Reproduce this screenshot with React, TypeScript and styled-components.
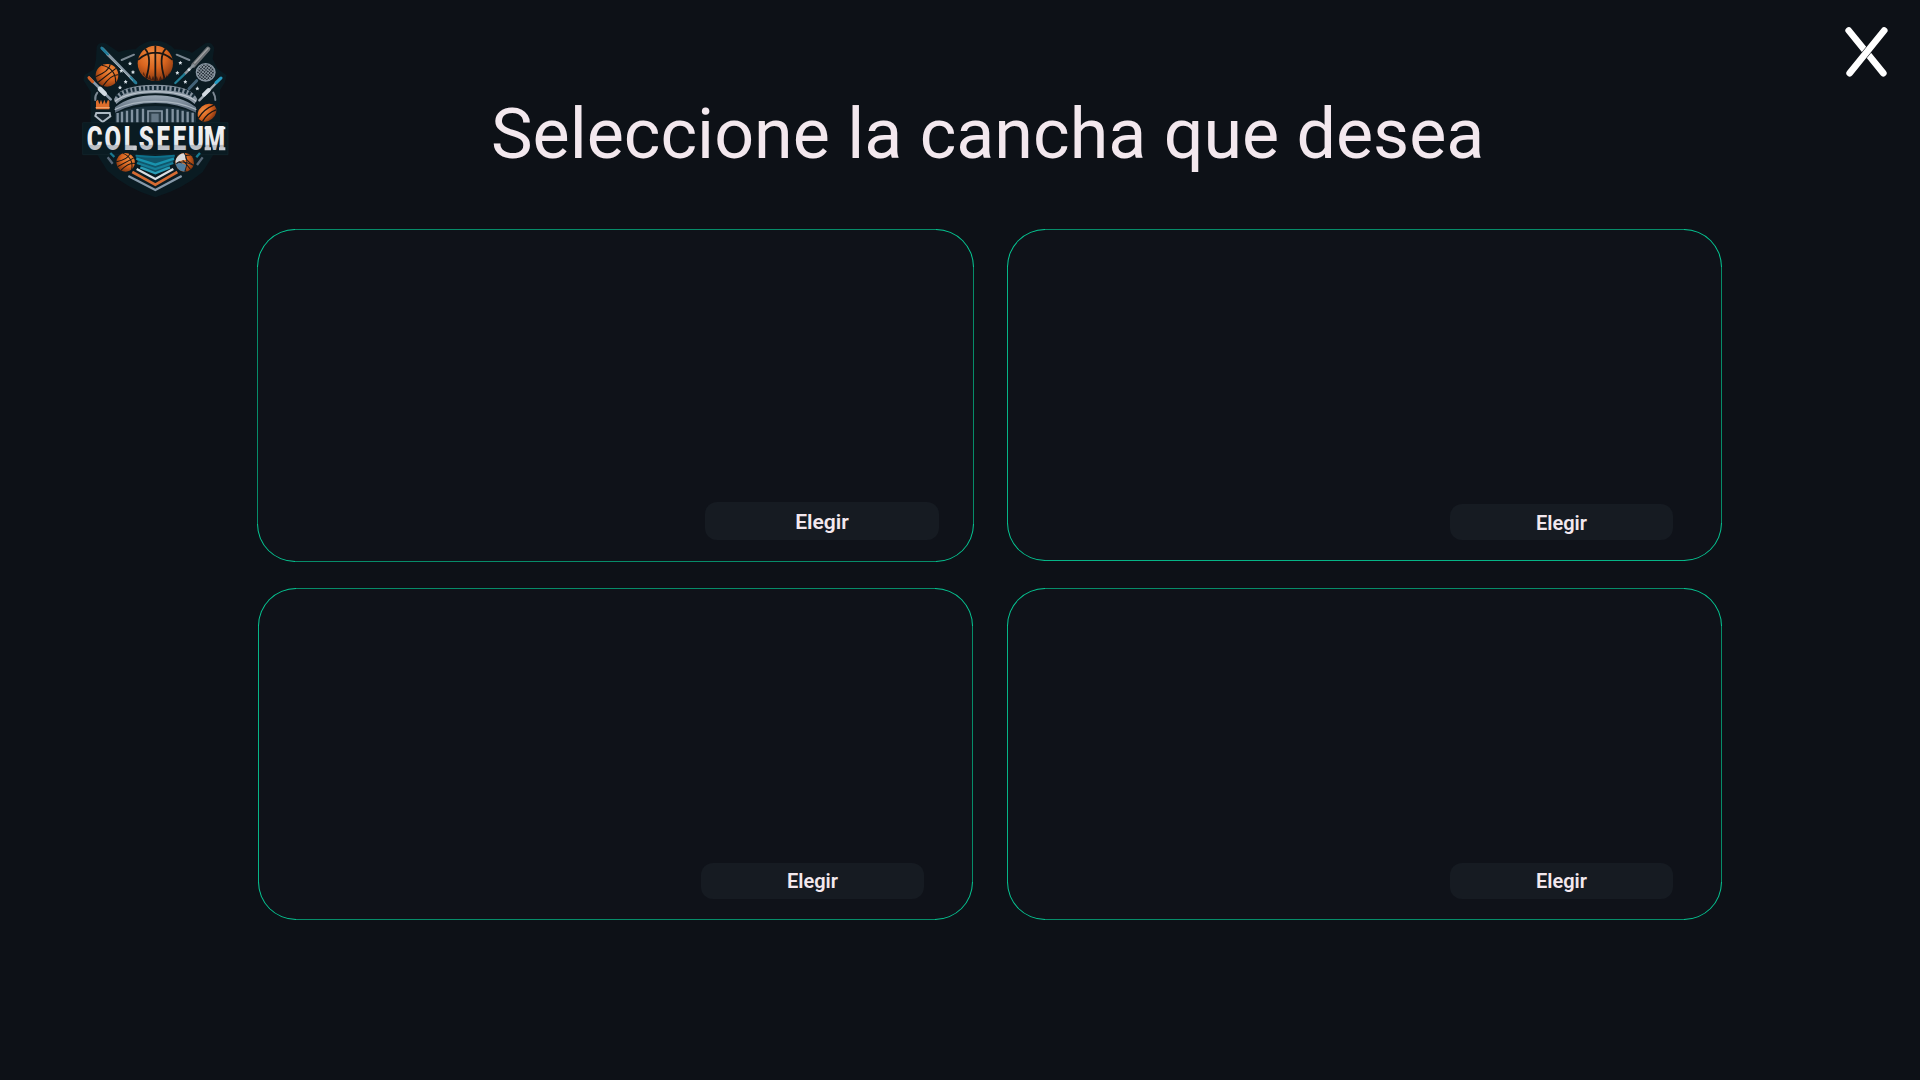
import React from "react";
import styled, { createGlobalStyle } from "styled-components";

const GlobalStyle = createGlobalStyle`
  * { box-sizing: border-box; }
  body { margin: 0; background: #0d1117; overflow: hidden; }
`;

const Screen = styled.div`
  width: 1920px;
  height: 1080px;
  background: #0d1117;
  color: #f3e8ee;
  font-family: Roboto, "Liberation Sans", sans-serif;
  display: flex;
  flex-direction: column;
`;

const Header = styled.header`
  height: 229px;
  display: flex;
  align-items: flex-start;
  padding: 30px 30px 0 70px;
`;

const LogoArt = styled.svg`
  width: 170px;
  height: 170px;
  flex: none;
  overflow: visible;
`;

const Title = styled.h1`
  margin: 62px 0 0;
  padding-left: 251px;
  flex: 1;
  font-size: 70px;
  line-height: 84px;
  font-weight: 400;
  white-space: nowrap;
`;

const CloseButton = styled.button`
  width: 46px;
  height: 54px;
  margin-top: -5px;
  padding: 0;
  border: 0;
  background: none;
  color: #fff;
  display: flex;
`;

const Courts = styled.main`
  display: flex;
  flex-direction: column;
  padding-left: 257px;
`;

const CourtRow = styled.section<{ $height: number }>`
  display: flex;
  align-items: flex-start;
  height: ${(p) => p.$height}px;
`;

interface CardProps {
  $w: number;
  $h: number;
  $ml: number;
  $pad: string;
  $edges: string[];
}

const solid = (c: string) => `linear-gradient(${c}, ${c})`;

/* Straight edges are softer than the rounded corners, so each one is its own background layer. */
const CourtCard = styled.article<CardProps>`
  width: ${(p) => p.$w}px;
  height: ${(p) => p.$h}px;
  margin-left: ${(p) => p.$ml}px;
  padding: ${(p) => p.$pad};
  border: 1px solid transparent;
  border-radius: 38px;
  background:
    ${solid("#0f1219")} padding-box,
    ${(p) => solid(p.$edges[0])} 50% 0 / calc(100% - 76px) 1px no-repeat border-box,
    ${(p) => solid(p.$edges[1])} 100% 50% / 1px calc(100% - 76px) no-repeat border-box,
    ${(p) => solid(p.$edges[2])} 50% 100% / calc(100% - 76px) 1px no-repeat border-box,
    ${(p) => solid(p.$edges[3])} 0 50% / 1px calc(100% - 76px) no-repeat border-box,
    ${solid("#05c894")} border-box;
  display: flex;
  justify-content: flex-end;
  align-items: flex-end;
`;

const ChooseButton = styled.button<{ $large?: boolean; $drop: number }>`
  width: ${(p) => (p.$large ? 234 : 223)}px;
  height: ${(p) => (p.$large ? 38 : 36)}px;
  padding: ${(p) => p.$drop}px 0 0;
  border: 0;
  border-radius: 12px;
  background: #161b22;
  color: #f3e8ee;
  font-family: inherit;
  font-size: ${(p) => (p.$large ? 21 : 20)}px;
  line-height: 24px;
  font-weight: 600;
`;

const Ball = ({ x, y, r, turn = 0 }: { x: number; y: number; r: number; turn?: number }) => (
  <g transform={`translate(${x} ${y}) rotate(${turn}) scale(${r / 50})`}>
    <circle r="50" fill="url(#ball)" />
    <path d="M0-50V50M-49-10Q-26-30 0-30T49-10M-29-41Q-8-18-26 43M29-41Q8-18 26 43" fill="none" stroke="#1a1613" strokeWidth="5" />
  </g>
);

const Logo = () => (
  <LogoArt viewBox="0 0 510 510" role="img" aria-label="Colseeum">
    <defs>
      <radialGradient id="ball" cx="0.42" cy="0.25" r="0.8">
        <stop offset="0" stopColor="#f08d42" />
        <stop offset="0.5" stopColor="#d9651f" />
        <stop offset="1" stopColor="#7d320f" />
      </radialGradient>
      <linearGradient id="steel" x1="0" y1="0" x2="0" y2="1">
        <stop offset="0" stopColor="#f7f7f7" />
        <stop offset="0.64" stopColor="#e6e7ea" />
        <stop offset="0.67" stopColor="#b9bdc3" />
        <stop offset="1" stopColor="#c9ccd1" />
      </linearGradient>
      <linearGradient id="roof" x1="0" y1="0" x2="0" y2="1">
        <stop offset="0" stopColor="#9ba9b6" />
        <stop offset="1" stopColor="#536373" />
      </linearGradient>
      <pattern id="net" width="7" height="7" patternUnits="userSpaceOnUse" patternTransform="rotate(40)">
        <path d="M0 0H7M0 0V7" stroke="#a3aeb7" strokeWidth="3.4" />
      </pattern>
    </defs>

    <path d="M80 50Q88 34 106 40L146 66Q174 56 197 58Q220 32 256 32Q292 32 313 58Q344 58 366 68L406 40Q425 34 433 54L428 86L442 116L470 136L464 158L450 180V278H474V374H430L398 426Q340 476 256 502Q170 475 112 422L82 374H38V278H62V185L40 150L44 134L72 118L78 88Z" fill="#0a1b22" />

    <g strokeLinecap="round" fill="none">
      <path d="M155 90L192 74M320 74L358 90M76 210Q74 198 82 188M436 210Q436 198 430 188" stroke="#7b8893" strokeWidth="6" />
      <path d="M98 56L197 158" stroke="#8999a6" strokeWidth="8" />
      <path d="M95 54L113 73M182 143L198 159" stroke="#217c99" strokeWidth="8" />
      <path d="M110 75L188 151" stroke="#c0c7ce" strokeWidth="2" />
      <path d="M414 57L370 106" stroke="#6c7074" strokeWidth="14" />
      <path d="M414 55L374 99" stroke="#a2a4a5" strokeWidth="4" />
      <path d="M370 106L345 131" stroke="#8a949b" strokeWidth="8" />
      <path d="M343 133L316 159" stroke="#207d94" strokeWidth="7" />
      <path d="M58 144L122 208" stroke="#8b9aa8" strokeWidth="8" />
      <path d="M57 143L68 155" stroke="#ce5d25" strokeWidth="9" />
      <path d="M90 177L104 191" stroke="#d2dbe2" strokeWidth="14" />
      <path d="M453 144L388 211" stroke="#a2adb6" strokeWidth="7" />
      <path d="M453 144L438 158" stroke="#249ac0" strokeWidth="9" />
      <path d="M416 180L402 194" stroke="#d2dbe2" strokeWidth="12" />
      <path d="M380 152L357 176" stroke="#436277" strokeWidth="9" />
    </g>
    <ellipse cx="407" cy="127" rx="29" ry="27" fill="#263039" />
    <ellipse cx="407" cy="127" rx="28" ry="26" fill="url(#net)" stroke="#8795a1" strokeWidth="4" />
    <Ball x={256} y={100} r={53} />
    <path d="M212 121l7 12 2-8 5 16 4-11 5 15 4-11 5 15 5-12 6 14 5-13 6 14 5-14 6 12 4-14 5 12 4-13 4 9 6-19Q288 152 256 153Q226 151 212 121Z" fill="#31170f" opacity="0.75" />
    <Ball x={111} y={136} r={34} turn={52} />
    <g fill="#d3dbe1">
      {[[180, 100], [154, 122], [189, 126], [167, 155], [150, 172], [331, 98], [357, 118], [322, 128], [346, 155], [382, 175]].map(([x, y]) => (
        <path key={`${x}-${y}`} d={`M${x} ${y - 6}l2 4 4 1-3 3 1 4-4-2-4 2 1-4-3-3 4-1z`} />
      ))}
    </g>

    <path d="M132 208Q146 165 256 164Q366 165 382 208L374 222Q340 190 256 190Q172 190 139 222Z" fill="#8794a0" />
    <path d="M141 201Q164 174 256 174Q348 174 374 201" fill="none" stroke="#142935" strokeWidth="12" strokeDasharray="7 6" />
    <path d="M134 214Q176 185 256 185Q338 185 379 214" fill="none" stroke="#bbc5cd" strokeWidth="4" />
    <path d="M135 232Q180 196 256 196Q332 196 378 232V248Q326 219 256 219Q184 219 135 248Z" fill="url(#roof)" />
    <path d="M134 239Q184 214 256 214Q329 214 379 239" fill="none" stroke="#aab6c0" strokeWidth="4" />
    <path d="M136 250Q188 228 256 228Q324 228 378 250V278H136Z" fill="#1a2f3b" />
    <path d="M143 249V278M156 245V278M171 242V278M186 239V278M202 237V278M219 236V278M291 236V278M308 237V278M323 239V278M338 242V278M353 245V278M368 248V278" stroke="#8293a1" strokeWidth="7" />
    <path d="M234 278V243H276V278" fill="#30424e" stroke="#899aa8" strokeWidth="5" />
    <path d="M244 278V251H266V278Z" fill="#647786" />

    <path d="M78 238V214L84 209L88 223L93 209L98 223L103 209L108 223L114 209L118 214V238Z" fill="#dd6d2b" />
    <path d="M77 233H119" stroke="#efa26d" strokeWidth="4" />
    <path d="M79 249H119L121 259L98 276L76 258Z" fill="#172630" stroke="#aebac4" strokeWidth="6" />
    <g transform="translate(411 248) rotate(-40)">
      <ellipse rx="31" ry="24" fill="url(#ball)" />
      <path d="M-30-4Q0-14 30-4M-26 11Q0 2 26 11" fill="none" stroke="#1a1613" strokeWidth="4" />
    </g>

    <path d="M38 278H474V374H38Z" fill="#0a1b22" stroke="#15252d" strokeWidth="2" />
    <text
      transform="translate(0 361) scale(0.72 1)"
      x="103 178 251 318 388 456 525 602"
      textAnchor="middle"
      fontFamily="Roboto, sans-serif"
      fontWeight="900"
      fontSize="100"
      fill="url(#steel)"
    >
      COLSEEUM
    </text>
    <path d="M404 290H422V298H404ZM448 290H466V298H448Z" fill="#f3f4f5" />
    <path d="M190 348H200V361H190ZM404 352H423V361H404ZM447 352H466V361H447Z" fill="#c9ccd1" />

    <path d="M196 376Q256 381 315 376L310 395Q284 424 256 431Q222 422 204 397Z" fill="#10566b" />
    <g fill="none" strokeWidth="7">
      <path d="M197 377Q256 384 314 377" stroke="#0d718c" strokeWidth="5" />
      <path d="M199 386L256 404L312 386" stroke="#1993ae" />
      <path d="M201 399L256 417L310 399" stroke="#167e98" />
      <path d="M211 412L256 430L300 412" stroke="#2b9db6" />
      <path d="M200 417L256 447L310 417" stroke="#d9dee2" />
      <path d="M187 426L256 464L322 426" stroke="#d56b32" strokeWidth="8" />
      <path d="M175 438L256 480L335 438" stroke="#8799a9" />
      <path d="M113 382L128 401M398 382L381 405" stroke="#596878" />
      <path d="M121 369L133 381M390 369L379 382" stroke="#197a91" />
    </g>
    <Ball x={167} y={397} r={28} turn={62} />
    <Ball x={344} y={397} r={28} turn={-40} />
    <path d="M317 390Q326 369 344 370L347 390Q331 388 317 401Z" fill="#d7dbdf" />
    <path d="M317 402Q332 394 348 405L345 425Q322 424 317 402Z" fill="#517f9f" />
    <path d="M317 401Q334 389 369 405M343 369Q358 394 344 425" fill="none" stroke="#17242d" strokeWidth="3" />
  </LogoArt>
);

const CloseIcon = () => (
  <svg width="46" height="54" viewBox="0 0 46 54" fill="none" strokeLinecap="round">
    <path d="M4.7 5.5L39.3 48.2" stroke="currentColor" strokeWidth="6.7" />
    <path d="M40.2 5.5L5.7 48.2" stroke="#0d1117" strokeWidth="7.6" strokeLinecap="butt" />
    <path d="M40.2 5.5L5.7 48.2" stroke="currentColor" strokeWidth="6.7" />
  </svg>
);

const mid = "#068c69";
const lit = "#05b587";

const rows = [
  {
    height: 359,
    cards: [
      { w: 717, h: 333, ml: 0, pad: "0 34px 21px 0", edges: [mid, mid, mid, mid], large: true, drop: 2 },
      { w: 715, h: 332, ml: 33, pad: "0 48px 20px 0", edges: [mid, mid, lit, lit], large: false, drop: 2 },
    ],
  },
  {
    height: 332,
    cards: [
      { w: 715, h: 332, ml: 1, pad: "0 48px 20px 0", edges: [mid, mid, mid, lit], large: false, drop: 0 },
      { w: 715, h: 332, ml: 34, pad: "0 48px 20px 0", edges: [mid, mid, mid, lit], large: false, drop: 0 },
    ],
  },
];

export default function App() {
  return (
    <Screen>
      <GlobalStyle />
      <Header>
        <Logo />
        <Title>Seleccione la cancha que desea</Title>
        <CloseButton aria-label="Cerrar">
          <CloseIcon />
        </CloseButton>
      </Header>
      <Courts>
        {rows.map((row, r) => (
          <CourtRow key={r} $height={row.height}>
            {row.cards.map((c, i) => (
              <CourtCard key={i} $w={c.w} $h={c.h} $ml={c.ml} $pad={c.pad} $edges={c.edges}>
                <ChooseButton $large={c.large} $drop={c.drop}>
                  Elegir
                </ChooseButton>
              </CourtCard>
            ))}
          </CourtRow>
        ))}
      </Courts>
    </Screen>
  );
}
